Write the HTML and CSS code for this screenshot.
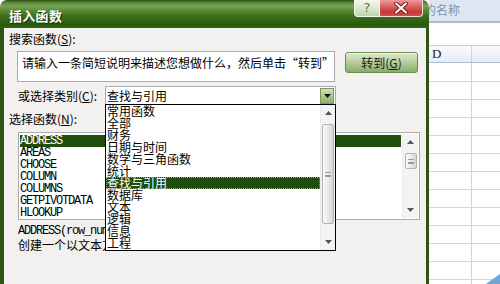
FILE: index.html
```html
<!DOCTYPE html>
<html lang="zh-CN">
<head>
<meta charset="utf-8">
<title>插入函数</title>
<link rel="stylesheet" href="styles.css">
</head>
<body>
<div class="screen">
  <div class="dialog">
    <div class="titlebar">
      <span class="title">插入函数</span>
      <div class="caption-btns">
        <span class="btn-help">?</span>
        <span class="btn-close"><svg width="16" height="12" viewBox="0 0 16 12"><path d="M3 1.5 L13 10.5 M13 1.5 L3 10.5" stroke="#7a1a1a" stroke-width="4" stroke-linecap="round"/><path d="M3 1.5 L13 10.5 M13 1.5 L3 10.5" stroke="#fff" stroke-width="2" stroke-linecap="round"/></svg></span>
      </div>
    </div>
    <div class="dlg-body">
      <div class="lbl">搜索函数(<u>S</u>):</div>
      <div class="search-row">
        <div class="search-box">请输入一条简短说明来描述您想做什么，然后单击“转到”</div>
        <div class="go-btn">转到(<u>G</u>)</div>
      </div>
      <div class="cat-row">
        <div class="lbl cat-lbl">或选择类别(<u>C</u>):</div>
        <div class="combo">
          <span class="combo-text">查找与引用</span>
          <span class="combo-btn"><svg width="7" height="4" viewBox="0 0 7 4"><polygon points="0,0 7,0 3.5,4" fill="#111"/></svg></span>
          <div class="dropdown">
            <div class="dd-items">
              <div class="dd-item">常用函数</div>
              <div class="dd-item">全部</div>
              <div class="dd-item">财务</div>
              <div class="dd-item">日期与时间</div>
              <div class="dd-item">数学与三角函数</div>
              <div class="dd-item">统计</div>
              <div class="dd-item sel">查找与引用</div>
              <div class="dd-item">数据库</div>
              <div class="dd-item">文本</div>
              <div class="dd-item">逻辑</div>
              <div class="dd-item">信息</div>
              <div class="dd-item">工程</div>
            </div>
            <div class="vs vs-dd">
              <div class="vs-btn"><svg width="7" height="4" viewBox="0 0 7 4"><polygon points="0,4 7,4 3.5,0" fill="#555"/></svg></div>
              <div class="thumb thumb-dd"><span class="grip"></span></div>
              <div class="vs-space"></div>
              <div class="vs-btn"><svg width="7" height="4" viewBox="0 0 7 4"><polygon points="0,0 7,0 3.5,4" fill="#555"/></svg></div>
            </div>
          </div>
        </div>
      </div>
      <div class="lbl lbl-fn">选择函数(<u>N</u>):</div>
      <div class="listbox">
        <div class="fn-items">
          <div class="fn-item sel">ADDRESS</div>
          <div class="fn-item">AREAS</div>
          <div class="fn-item">CHOOSE</div>
          <div class="fn-item">COLUMN</div>
          <div class="fn-item">COLUMNS</div>
          <div class="fn-item">GETPIVOTDATA</div>
          <div class="fn-item">HLOOKUP</div>
        </div>
        <div class="vs vs-fn">
          <div class="vs-btn"><svg width="7" height="4" viewBox="0 0 7 4"><polygon points="0,4 7,4 3.5,0" fill="#555"/></svg></div>
          <div class="thumb thumb-fn"><span class="grip"></span></div>
          <div class="vs-space"></div>
          <div class="vs-btn"><svg width="7" height="4" viewBox="0 0 7 4"><polygon points="0,0 7,0 3.5,4" fill="#555"/></svg></div>
        </div>
      </div>
      <div class="sig">ADDRESS(row_num,column_num,abs_num,a1,sheet_text)</div>
      <div class="desc">创建一个以文本方式对工作簿中某一单元格进行引用</div>
    </div>
  </div>
  <div class="sheet">
    <div class="namebar"><span class="name-text">的名称</span></div>
    <div class="blank"></div>
    <div class="hdr"><div class="cell">D</div><div class="cell-rest"></div></div>
    <div class="row first"><div class="cell"></div><div class="cell-rest"></div></div>
    <div class="row"><div class="cell"></div><div class="cell-rest"></div></div>
    <div class="row"><div class="cell"></div><div class="cell-rest"></div></div>
    <div class="row"><div class="cell"></div><div class="cell-rest"></div></div>
    <div class="row"><div class="cell"></div><div class="cell-rest"></div></div>
    <div class="row"><div class="cell"></div><div class="cell-rest"></div></div>
    <div class="row"><div class="cell"></div><div class="cell-rest"></div></div>
    <div class="row"><div class="cell"></div><div class="cell-rest"></div></div>
    <div class="row"><div class="cell"></div><div class="cell-rest"></div></div>
    <div class="row"><div class="cell"></div><div class="cell-rest"></div></div>
    <div class="row"><div class="cell"></div><div class="cell-rest"></div></div>
    <div class="row"><div class="cell"></div><div class="cell-rest"></div></div>
    <div class="row"><div class="cell"></div><div class="cell-rest"></div></div>
    <svg class="corner-mark" width="14" height="10" viewBox="0 0 14 10"><polygon points="14,0 14,10 0,10" fill="#6ea6d8"/></svg>
  </div>
</div>
</body>
</html>
```

FILE: styles.css
```css
html, body {
  margin: 0;
  padding: 0;
}
body {
  width: 500px;
  height: 284px;
  overflow: hidden;
  background: #ffffff;
  font-family: "Noto Sans CJK SC", "DejaVu Sans", sans-serif;
  font-size: 12px;
  color: #000;
}
u {
  text-decoration: underline;
}
.screen {
  display: flex;
  height: 284px;
}

/* ---------- dialog ---------- */
.dialog {
  width: 429px;
  flex: none;
  display: flex;
  flex-direction: column;
  position: relative;
  z-index: 2;
}
.titlebar {
  height: 28px;
  box-sizing: border-box;
  display: flex;
  justify-content: space-between;
  align-items: flex-start;
  padding: 0 6px 0 9px;
  border-radius: 7px 7px 0 0;
  background: linear-gradient(to bottom,
    #2c5512 0px, #5f8c3d 3px, #79a255 6px, #5f8f38 10px,
    #3f7420 15px, #2f6212 21px, #285a0c 26px, #3a6a1c 28px);
}
.title {
  margin-top: 8px;
  line-height: 15px;
  color: #ffffff;
  font-weight: bold;
  font-size: 13px;
  text-shadow: 1px 1px 0 #16330a;
  letter-spacing: 0.3px;
}
.caption-btns {
  display: flex;
}
.btn-help {
  width: 26px;
  height: 17px;
  box-sizing: border-box;
  border: 1px solid #f4f8ee;
  border-top: none;
  border-radius: 0 0 0 4px;
  background: linear-gradient(to bottom, #f4f8ef, #d6e6c8 60%, #bcd3a6);
  color: #4f7f30;
  font-family: "DejaVu Sans", sans-serif;
  font-size: 13px;
  line-height: 16px;
  text-align: center;
}
.btn-close {
  width: 43px;
  height: 17px;
  box-sizing: border-box;
  border: 1px solid #f2d8d8;
  border-top: none;
  border-left: none;
  border-radius: 0 0 4px 0;
  background: linear-gradient(to bottom, #ee9a9a, #d85a5a 45%, #c63838 75%, #d25050);
  display: flex;
  align-items: center;
  justify-content: center;
}
.dlg-body {
  flex: 1;
  background: #f2f1ef;
  border-left: 4px solid #2d5415;
  border-right: 3px solid #2d5415;
  padding: 4px 0 0 5px;
}
.lbl {
  height: 14px;
  line-height: 14px;
  white-space: nowrap;
}
.search-row {
  display: flex;
  align-items: flex-start;
  margin-top: 5px;
  margin-left: 8px;
}
.search-box {
  width: 318px;
  height: 31px;
  box-sizing: border-box;
  border: 1px solid #abaaae;
  background: #ffffff;
  padding: 4px 0 0 4px;
  line-height: 14px;
  white-space: nowrap;
  overflow: hidden;
}
.go-btn {
  margin-left: 10px;
  margin-top: 1px;
  width: 73px;
  height: 21px;
  box-sizing: border-box;
  border: 1px solid #6f8c55;
  border-radius: 3px;
  background: linear-gradient(to bottom, #dde9cf, #b9d09f 45%, #9ab97c 80%, #8aac6b);
  line-height: 19px;
  text-align: center;
  color: #1a1a1a;
  box-shadow: inset 0 1px 0 #f0f6ea;
}
.cat-row {
  display: flex;
  align-items: center;
  margin-top: 4px;
  margin-left: 9px;
  height: 19px;
}
.cat-lbl {
  width: 87px;
}
.combo {
  position: relative;
  width: 231px;
  height: 19px;
  box-sizing: border-box;
  border: 1px solid #abaaae;
  background: #ffffff;
  display: flex;
  align-items: center;
  justify-content: space-between;
}
.combo-text {
  padding-left: 1px;
  line-height: 14px;
}
.combo-btn {
  width: 14px;
  height: 16px;
  margin-right: 1px;
  box-sizing: border-box;
  border: 1px solid #7b985f;
  background: linear-gradient(to bottom, #cfe0bb, #a9c688 55%, #8fb16b);
  display: flex;
  align-items: center;
  justify-content: center;
}
.dropdown {
  position: absolute;
  left: -1px;
  top: 17px;
  width: 231px;
  height: 147px;
  box-sizing: border-box;
  border: 1px solid #000000;
  background: #ffffff;
  display: flex;
  z-index: 5;
}
.dd-items {
  flex: 1;
}
.dd-item {
  height: 12px;
  line-height: 12px;
  padding-left: 1px;
  white-space: nowrap;
  font-size: 12px;
}
.dd-item.sel {
  background: #1e4d0e;
  color: #ffffff;
  outline: 1px dotted #8fb070;
  outline-offset: -1px;
}
.vs {
  background: #f3f3f3;
  border-left: 1px solid #ebebeb;
  display: flex;
  flex-direction: column;
  align-items: center;
  box-sizing: border-box;
}
.vs-dd {
  width: 15px;
}
.vs-fn {
  width: 16px;
  margin: 1px 1px 1px 0;
}
.vs-btn {
  width: 100%;
  height: 16px;
  display: flex;
  align-items: center;
  justify-content: center;
  flex: none;
}
.thumb {
  width: 12px;
  box-sizing: border-box;
  border: 1px solid #b3b3b3;
  border-radius: 2px;
  background: linear-gradient(to right, #fafafa, #e6e6e6 60%, #d4d4d4);
  display: flex;
  align-items: center;
  justify-content: center;
  flex: none;
}
.thumb-dd {
  height: 100px;
  margin-top: 3px;
}
.thumb-fn {
  height: 16px;
  margin-top: 3px;
}
.grip {
  width: 6px;
  height: 5px;
  border-top: 1px solid #9a9a9a;
  border-bottom: 1px solid #9a9a9a;
  background: linear-gradient(to bottom, transparent 2px, #9a9a9a 2px, #9a9a9a 3px, transparent 3px);
  box-sizing: border-box;
}
.vs-space {
  flex: 1;
}
.lbl-fn {
  margin-top: 7px;
}
.listbox {
  margin-top: 6px;
  margin-left: 9px;
  width: 402px;
  height: 88px;
  box-sizing: border-box;
  border: 1px solid #abaaae;
  background: #ffffff;
  display: flex;
}
.fn-items {
  flex: 1;
  padding: 2px 1px 0 1px;
}
.fn-item {
  height: 12px;
  line-height: 12px;
  font-family: "Liberation Mono", "DejaVu Sans Mono", monospace;
  font-size: 12px;
  letter-spacing: -1.2px;
  white-space: nowrap;
}
.fn-item.sel {
  background: #1e4d0e;
  color: #ffffff;
}
.sig {
  margin-top: 4px;
  margin-left: 9px;
  line-height: 14px;
  font-family: "Liberation Mono", "DejaVu Sans Mono", monospace;
  font-size: 12px;
  letter-spacing: -1.2px;
  white-space: nowrap;
}
.desc {
  margin-left: 9px;
  line-height: 14px;
  white-space: nowrap;
}

/* ---------- spreadsheet behind ---------- */
.sheet {
  flex: 1;
  overflow: hidden;
  position: relative;
  background: #ffffff;
}
.namebar {
  height: 21px;
  background: #dde7f3;
  border-bottom: 2px solid #aabbd3;
  line-height: 20px;
  white-space: nowrap;
  color: #8294b2;
}
.name-text {
  display: inline-block;
  margin-left: -5px;
}
.blank {
  height: 22px;
}
.hdr {
  height: 16px;
  border-top: 1px solid #c6ccd6;
  border-bottom: 1px solid #a9bdd2;
  background: linear-gradient(to bottom, #f9fbfd, #e6ecf3);
  display: flex;
}
.hdr .cell {
  font-family: "Liberation Serif", serif;
  font-size: 13px;
  line-height: 16px;
  padding-left: 3px;
  color: #222;
}
.cell {
  width: 43px;
  box-sizing: border-box;
  border-right: 1px solid #cfd5de;
  flex: none;
}
.cell-rest {
  flex: 1;
}
.row {
  height: 17px;
  border-bottom: 1px solid #d3d8e0;
  display: flex;
}
.row.first {
  height: 18px;
}
.corner-mark {
  position: absolute;
  right: 0;
  bottom: 0;
}
```
